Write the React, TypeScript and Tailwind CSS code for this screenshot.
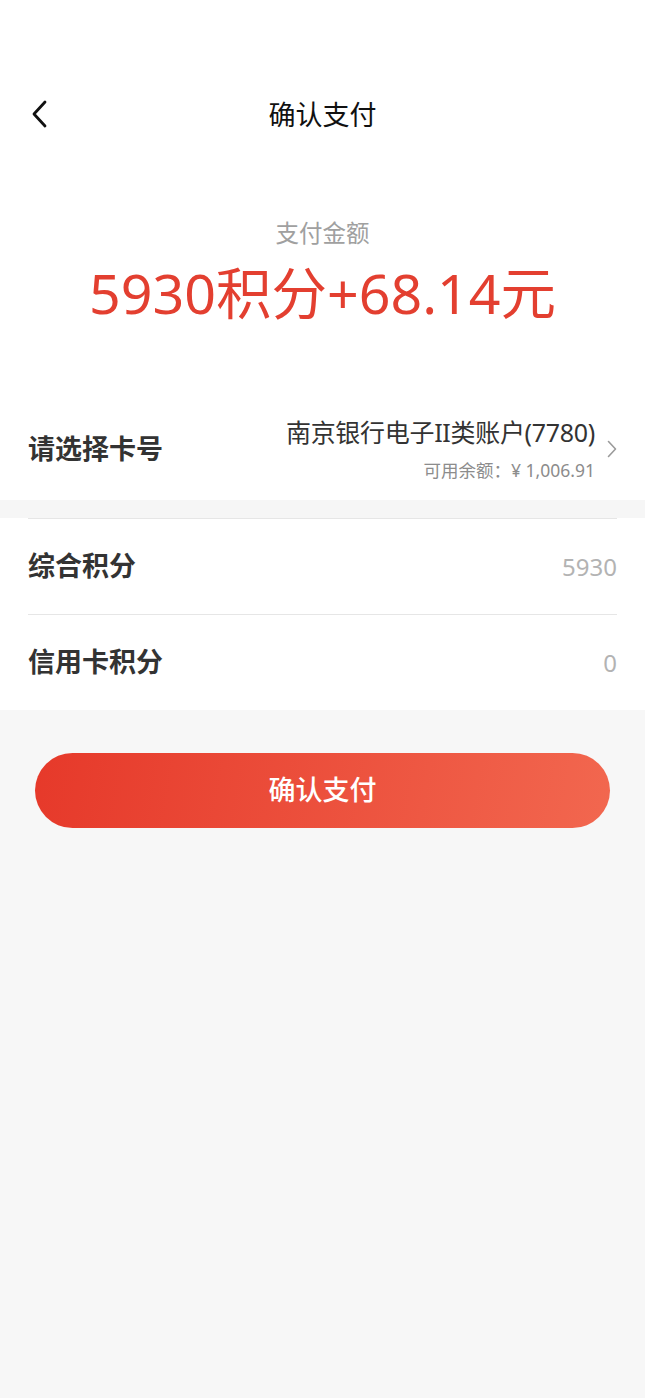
import React from 'react';

const FONT = '"Noto Sans", "Noto Sans CJK SC", sans-serif';

const Row: React.FC<{ label: string; value: string }> = ({ label, value }) => (
  <div className="flex h-[96px] items-center justify-between border-t border-[#e6e6e6]">
    <span className="text-[27px] font-semibold text-[#333333]">{label}</span>
    <span className="text-[24px] text-[#b3b3b3]">{value}</span>
  </div>
);

const App: React.FC = () => {
  return (
    <div className="min-h-[1398px] w-full bg-[#f7f7f7]" style={{ fontFamily: FONT }}>
      <div className="bg-white">
        {/* Nav bar */}
        <div className="h-[84px]" />
        <div className="relative flex h-[60px] items-center justify-center">
          <svg className="absolute left-[28px] top-[16px]" width="24" height="28" viewBox="0 0 24 28" fill="none">
            <path d="M17 2 L6 14 L17 26" stroke="#111" strokeWidth="2.8" strokeLinecap="round" strokeLinejoin="round" />
          </svg>
          <span className="text-[27px] leading-none text-[#111111]">确认支付</span>
        </div>

        {/* Amount */}
        <div className="flex flex-col items-center pt-[74px]">
          <div className="text-[23.5px] leading-[30px] text-[#a0a0a0]">支付金额</div>
          <div className="mt-[13px] text-[55.5px] leading-[64px] text-[#e33f30]">5930积分+68.14元</div>
        </div>

        {/* Card select */}
        <div className="mt-[73px] flex h-[102px] items-center justify-between pl-[28px] pr-[28px]">
          <span className="text-[27px] font-semibold text-[#333333]">请选择卡号</span>
          <div className="flex items-center gap-[12px]">
            <div className="flex flex-col items-end">
              <span className="text-[25px] leading-[30px] tracking-[-0.3px] text-[#333333]">南京银行电子II类账户(7780)</span>
              <span className="mt-[12px] text-[17.5px] leading-[22px] text-[#8c8c8c]">可用余额：¥ 1,006.91</span>
            </div>
            <svg width="10" height="18" viewBox="0 0 10 18" fill="none">
              <path d="M1.5 1.5 L8.5 9 L1.5 16.5" stroke="#9a9a9a" strokeWidth="1.6" strokeLinecap="round" strokeLinejoin="round" />
            </svg>
          </div>
        </div>
      </div>

      <div className="h-[18px] bg-[#f6f6f6]" />

      <div className="bg-white px-[28px]">
        <Row label="综合积分" value="5930" />
        <Row label="信用卡积分" value="0" />
      </div>

      <div className="px-[35px] pt-[43px]">
        <button className="flex h-[75px] w-full items-center justify-center rounded-full bg-[linear-gradient(100deg,#e6392a,#f2674f)] text-[27px] font-medium text-white">
          确认支付
        </button>
      </div>
    </div>
  );
};

export default App;
